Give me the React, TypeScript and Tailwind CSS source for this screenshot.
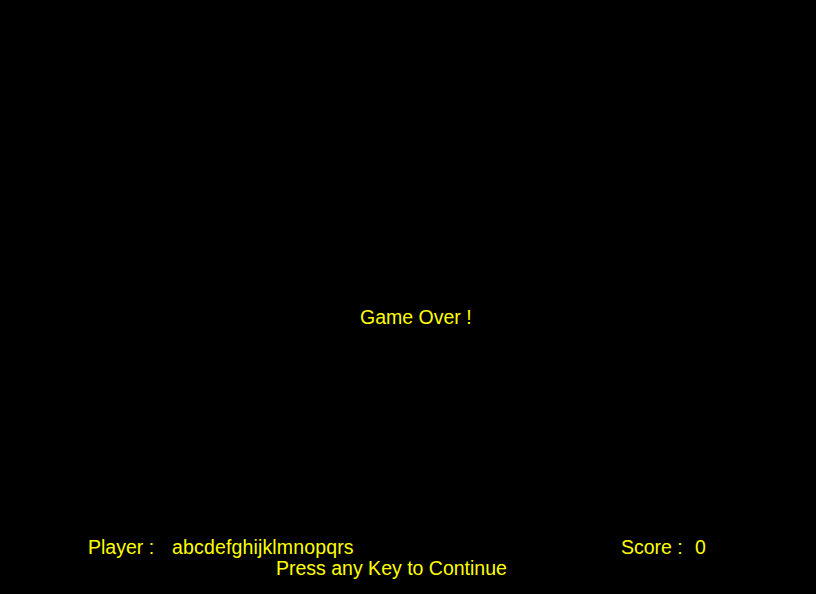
import React from "react";

export default function App() {
  const player = "abcdefghijklmnopqrs";
  const score = 0;

  return (
    <div
      className="w-[816px] h-[594px] bg-black text-[#ffff00] text-[19.5px] leading-[22px] flex flex-col"
      style={{ fontFamily: '"Liberation Sans", Arial, sans-serif' }}
    >
      {/* message in the middle */}
      <div className="pt-[306px] pl-[360px]">Game Over !</div>

      {/* status line */}
      <div className="mt-[208px] flex">
        <div className="pl-[88px] w-[172px]">Player :</div>
        <div className="w-[449px] tracking-[0.15px]">{player}</div>
        <div className="w-[74px]">Score :</div>
        <div>{score}</div>
      </div>
      <div className="pl-[276px] -mt-px">Press any Key to Continue</div>
    </div>
  );
}
